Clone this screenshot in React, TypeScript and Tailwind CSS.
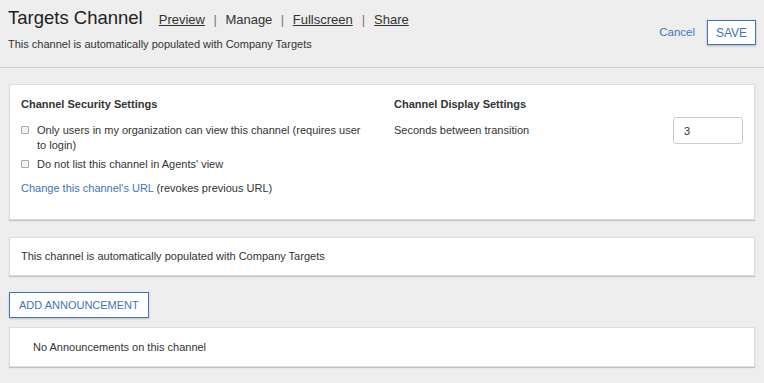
export default function App() {
  return (
    <div className="min-h-screen w-[764px] h-[383px] overflow-hidden bg-[#eeeeee] text-[#333333] font-['Liberation_Sans',Arial,sans-serif]">
      {/* Header */}
      <div className="flex justify-between h-[68px] border-b border-[#cccccc] px-2">
        <div className="pt-[6px]">
          <div className="flex items-baseline">
            <h1 className="text-[18.5px] leading-[24px] text-[#222222]">Targets Channel</h1>
            <nav className="flex items-baseline ml-[16px] text-[13px] text-[#333333]">
              <a className="underline">Preview</a>
              <span className="mx-[8.5px] text-[#777777]">|</span>
              <span>Manage</span>
              <span className="mx-[8.5px] text-[#777777]">|</span>
              <a className="underline">Fullscreen</a>
              <span className="mx-[9px] text-[#777777]">|</span>
              <a className="underline">Share</a>
            </nav>
          </div>
          <p className="mt-[7px] text-[11px] leading-[14px]">This channel is automatically populated with Company Targets</p>
        </div>
        <div className="flex items-center gap-[12px] pt-[20px] self-start">
          <a className="text-[11.5px] text-[#3d76b8]">Cancel</a>
          <button className="w-[49px] h-[25px] bg-white border border-[#3d76b8] shadow-[0_1px_2px_rgba(0,0,0,0.25)] text-[12px] text-[#3d76b8]">SAVE</button>
        </div>
      </div>

      {/* Content */}
      <div className="px-[9px] pt-[16px]">
        <div className="bg-white border border-[#dddddd] shadow-[0_1px_1px_rgba(0,0,0,0.18)] h-[136px] px-[11px] pt-[12px] flex">
          <div className="w-[373px]">
            <h2 className="text-[11px] font-bold leading-[14px]">Channel Security Settings</h2>
            <label className="flex items-start mt-[12px] text-[11px] leading-[15px]">
              <span className="mt-[3px] w-[8px] h-[8px] border border-[#a9a9a9] rounded-[1px] bg-[#f2f2f2] shrink-0"></span>
              <span className="ml-[8px] w-[330px]">Only users in my organization can view this channel (requires user to login)</span>
            </label>
            <label className="flex items-start mt-[4px] text-[11px] leading-[15px]">
              <span className="mt-[3px] w-[8px] h-[8px] border border-[#a9a9a9] rounded-[1px] bg-[#f2f2f2] shrink-0"></span>
              <span className="ml-[8px]">Do not list this channel in Agents' view</span>
            </label>
            <p className="mt-[9px] text-[11px] leading-[15px]">
              <a className="text-[#3d76b8]">Change this channel's URL</a> (revokes previous URL)
            </p>
          </div>
          <div className="flex-1">
            <h2 className="text-[11px] font-bold leading-[14px]">Channel Display Settings</h2>
            <div className="flex justify-between items-start mt-[12px]">
              <span className="text-[11px] leading-[15px]">Seconds between transition</span>
              <input
                defaultValue="3"
                className="mt-[-6px] w-[70px] h-[27px] border border-[#cccccc] rounded-[3px] px-[10px] text-[11px] text-[#333333] outline-none"
              />
            </div>
          </div>
        </div>

        <div className="mt-[17px] bg-white border border-[#dddddd] shadow-[0_1px_1px_rgba(0,0,0,0.18)] h-[39px] px-[11px] flex items-center text-[11px]">
          This channel is automatically populated with Company Targets
        </div>

        <button className="mt-[16px] h-[26px] px-[9px] bg-white border border-[#3d76b8] shadow-[0_1px_2px_rgba(0,0,0,0.2)] text-[11px] text-[#3d76b8]">ADD ANNOUNCEMENT</button>

        <div className="mt-[9px] bg-white border border-[#dddddd] shadow-[0_1px_1px_rgba(0,0,0,0.18)] h-[40px] px-[23px] flex items-center text-[11px]">
          No Announcements on this channel
        </div>
      </div>
    </div>
  );
}
